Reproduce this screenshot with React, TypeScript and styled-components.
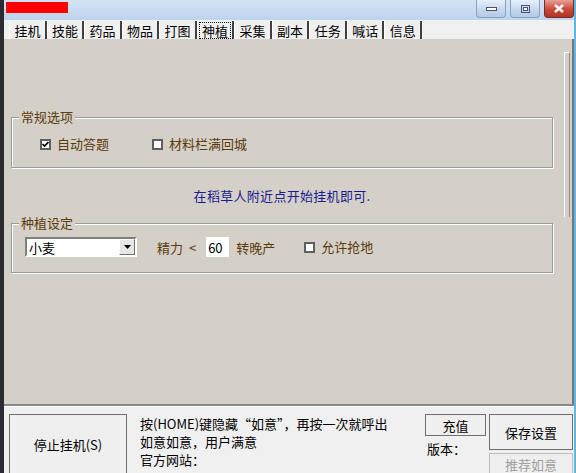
import React from 'react';
import styled, { createGlobalStyle } from 'styled-components';

const GlobalStyle = createGlobalStyle`
	html, body { margin: 0; padding: 0; background: #d4d0c8; }
	body { font-family: "Noto Sans CJK SC", "Liberation Sans", sans-serif; font-size: 13px; }
`;

const Window = styled.div`
	width: 576px;
	height: 473px;
	display: flex;
	flex-direction: column;
	overflow: hidden;
	border-left: 4px solid #2a2c30;
	border-right: 2px solid #62b6e4;
	box-sizing: border-box;
	background: #f0f0f0;
`;

const TitleBar = styled.div`
	height: 20px;
	flex: none;
	display: flex;
	align-items: flex-start;
	justify-content: space-between;
	background: linear-gradient(#d3e3f4, #bed4ed);
	padding: 0 0 0 2px;
`;

const RedMark = styled.div`
	width: 62px;
	height: 11px;
	margin-top: 2px;
	background: #ff0000;
`;

const Caption = styled.div`
	display: flex;
	gap: 4px;
`;

const CaptionButton = styled.div<{ $close?: boolean }>`
	width: 30px;
	height: 18px;
	border: 1px solid ${({ $close }) => ($close ? '#7a2b22' : '#8aa0bd')};
	border-top: none;
	border-radius: 0 0 4px 4px;
	box-sizing: border-box;
	background: ${({ $close }) =>
		$close ? 'linear-gradient(#e8a093, #c9483a 55%, #b23324)' : 'linear-gradient(#e8f0fb, #c6d8ee 55%, #b3c9e6)'};
	display: flex;
	align-items: center;
	justify-content: center;
`;

const TabStrip = styled.div`
	height: 19px;
	flex: none;
	display: flex;
	align-items: flex-end;
	padding-left: 5px;
	background: #f0f0f0;
`;

const Tab = styled.div<{ $active?: boolean }>`
	height: 18px;
	box-sizing: border-box;
	padding: 0 1px 0 1.5px;
	display: flex;
	align-items: center;
	border-left: 1px solid #ffffff;
	border-right: 2px solid #404040;
	background: #f0f0f0;
	span {
		padding: 0 2px;
		line-height: 15px;
		border: 1px dotted ${({ $active }) => ($active ? '#000' : 'transparent')};
	}
`;

const Panel = styled.div`
	flex: 1;
	display: flex;
	background: #d4d0c8;
	border-bottom: 1px solid #ffffff;
	box-shadow: inset 0 -2px 0 #888, inset -2px 0 0 #777;
	min-height: 0;
`;

const Content = styled.div`
	flex: 1;
	display: flex;
	flex-direction: column;
	padding: 78px 0 0 7px;
`;

const Gutter = styled.div`
	width: 18px;
	flex: none;
	padding-top: 13px;
`;

const SideBar = styled.div`
	width: 4px;
	height: 164px;
	margin-left: 8px;
	border-left: 1px solid #fff;
	border-top: 1px solid #fff;
	border-right: 1px solid #8a8a8a;
`;

const Group = styled.div<{ $h: number; $pt: number; $pl: number }>`
	position: relative;
	width: 542px;
	height: ${({ $h }) => $h}px;
	flex: none;
	box-sizing: border-box;
	padding: ${({ $pt, $pl }) => `${$pt}px 0 0 ${$pl}px`};
	border: 1px solid #9b9b9b;
	box-shadow: 1px 1px 0 #fff, inset 1px 1px 0 #fff;
`;

const Legend = styled.span`
	position: absolute;
	top: -9px;
	left: 7px;
	padding: 0 2px;
	line-height: 15px;
	background: #d4d0c8;
	color: #5b3a0c;
`;

const Row = styled.div`
	display: flex;
	align-items: center;
	color: #5b3a0c;
`;

const Check = styled.label<{ $w?: number; $ml?: number }>`
	display: flex;
	align-items: center;
	gap: 6px;
	width: ${({ $w }) => ($w ? `${$w}px` : 'auto')};
	margin-left: ${({ $ml }) => $ml ?? 0}px;
	color: #5b3a0c;
	line-height: 14px;
`;

const Box = styled.span`
	width: 11px;
	height: 11px;
	flex: none;
	box-sizing: border-box;
	border: 2px solid #5f5f5f;
	background: #fff;
	display: flex;
	align-items: center;
	justify-content: center;
`;

const Hint = styled.div`
	height: 55px;
	width: 542px;
	display: flex;
	align-items: center;
	justify-content: center;
	color: #1a1a90;
	letter-spacing: 0.3px;
`;

const Combo = styled.div`
	width: 112px;
	height: 20px;
	box-sizing: border-box;
	border: 2px solid;
	border-color: #808080 #fff #fff #808080;
	background: #fff;
	display: flex;
	align-items: center;
	justify-content: space-between;
	color: #000;
	padding-left: 2px;
`;

const DropButton = styled.div`
	width: 16px;
	height: 16px;
	box-sizing: border-box;
	background: #e6e6e6;
	border: 1px solid;
	border-color: #fff #6f6f6f #6f6f6f #fff;
	display: flex;
	align-items: center;
	justify-content: center;
`;

const Label = styled.span<{ $ml: number }>`
	margin-left: ${({ $ml }) => $ml}px;
	color: #5b3a0c;
	white-space: pre;
	word-spacing: 3px;
`;

const Field = styled.div<{ $ml: number }>`
	width: 23px;
	height: 20px;
	margin-left: ${({ $ml }) => $ml}px;
	background: #fff;
	color: #000;
	display: flex;
	align-items: center;
	padding-left: 2px;
	box-sizing: border-box;
`;

const BottomBar = styled.div`
	height: 66px;
	flex: none;
	display: flex;
	padding: 7px 0 0 5px;
	box-sizing: border-box;
	background: #f0f0f0;
	color: #000;
`;

const Button = styled.div<{ $w: number; $h: number; $disabled?: boolean }>`
	width: ${({ $w }) => $w}px;
	height: ${({ $h }) => $h}px;
	flex: none;
	box-sizing: border-box;
	border: 1px solid ${({ $disabled }) => ($disabled ? '#bdbdbd' : '#6f6f6f')};
	background: #efefef;
	color: ${({ $disabled }) => ($disabled ? '#a0a0a0' : '#000')};
	display: flex;
	align-items: center;
	justify-content: center;
`;

const Info = styled.div`
	width: 285px;
	padding: 1px 0 0 13px;
	box-sizing: border-box;
	display: flex;
	flex-direction: column;
	line-height: 18px;
	white-space: nowrap;
`;

const MidCol = styled.div`
	display: flex;
	flex-direction: column;
	gap: 5px;
	width: 64px;
	margin-left: 13px;
`;

const Version = styled.span`
	padding-left: 2px;
	line-height: 16px;
`;

const RightCol = styled.div`
	display: flex;
	flex-direction: column;
	gap: 3px;
`;

const Tick = () => (
	<svg width="7" height="7" viewBox="0 0 7 7">
		<path d="M0.5 3 L2.5 5 L6.5 1" stroke="#000" strokeWidth="1.6" fill="none" />
	</svg>
);

const tabs = ['挂机', '技能', '药品', '物品', '打图', '神植', '采集', '副本', '任务', '喊话', '信息'];

export default function App() {
	return (
		<Window>
			<GlobalStyle />
			<TitleBar>
				<RedMark />
				<Caption>
					<CaptionButton>
						<svg width="11" height="4" viewBox="0 0 11 4"><rect x="0.5" y="0.5" width="10" height="3" fill="#fff" stroke="#46556e" /></svg>
					</CaptionButton>
					<CaptionButton>
						<svg width="9" height="8" viewBox="0 0 9 8"><rect x="0.5" y="0.5" width="8" height="7" fill="none" stroke="#46556e" /><rect x="2.5" y="2.5" width="4" height="3" fill="#fff" stroke="#46556e" /></svg>
					</CaptionButton>
					<CaptionButton $close>
						<svg width="12" height="9" viewBox="0 0 12 9"><path d="M2 1 L10 8 M10 1 L2 8" stroke="#fff" strokeWidth="2.4" /></svg>
					</CaptionButton>
				</Caption>
			</TitleBar>
			<TabStrip>
				{tabs.map((t) => (
					<Tab key={t} $active={t === '神植'}>
						<span>{t}</span>
					</Tab>
				))}
			</TabStrip>
			<Panel>
				<Content>
					<Group $h={51} $pt={19} $pl={28}>
						<Legend>常规选项</Legend>
						<Row>
							<Check $w={112}>
								<Box><Tick /></Box>自动答题
							</Check>
							<Check>
								<Box />材料栏满回城
							</Check>
						</Row>
					</Group>
					<Hint>在稻草人附近点开始挂机即可.</Hint>
					<Group $h={50} $pt={13} $pl={13}>
						<Legend>种植设定</Legend>
						<Row>
							<Combo>
								小麦
								<DropButton>
									<svg width="7" height="4" viewBox="0 0 7 4"><path d="M0 0 H7 L3.5 4 Z" fill="#000" /></svg>
								</DropButton>
							</Combo>
							<Label $ml={20}>精力 &lt;</Label>
							<Field $ml={10}>60</Field>
							<Label $ml={7}>转晚产</Label>
							<Check $ml={29}>
								<Box />允许抢地
							</Check>
						</Row>
					</Group>
				</Content>
				<Gutter>
					<SideBar />
				</Gutter>
			</Panel>
			<BottomBar>
				<Button $w={118} $h={60}>停止挂机(S)</Button>
				<Info>
					<span>按(HOME)键隐藏“如意”，再按一次就呼出</span>
					<span>如意如意，用户满意</span>
					<span>官方网站：</span>
				</Info>
				<MidCol>
					<Button $w={61} $h={22}>充值</Button>
					<Version>版本：</Version>
				</MidCol>
				<RightCol>
					<Button $w={84} $h={36}>保存设置</Button>
					<Button $w={84} $h={22} $disabled>推荐如意</Button>
				</RightCol>
			</BottomBar>
		</Window>
	);
}
